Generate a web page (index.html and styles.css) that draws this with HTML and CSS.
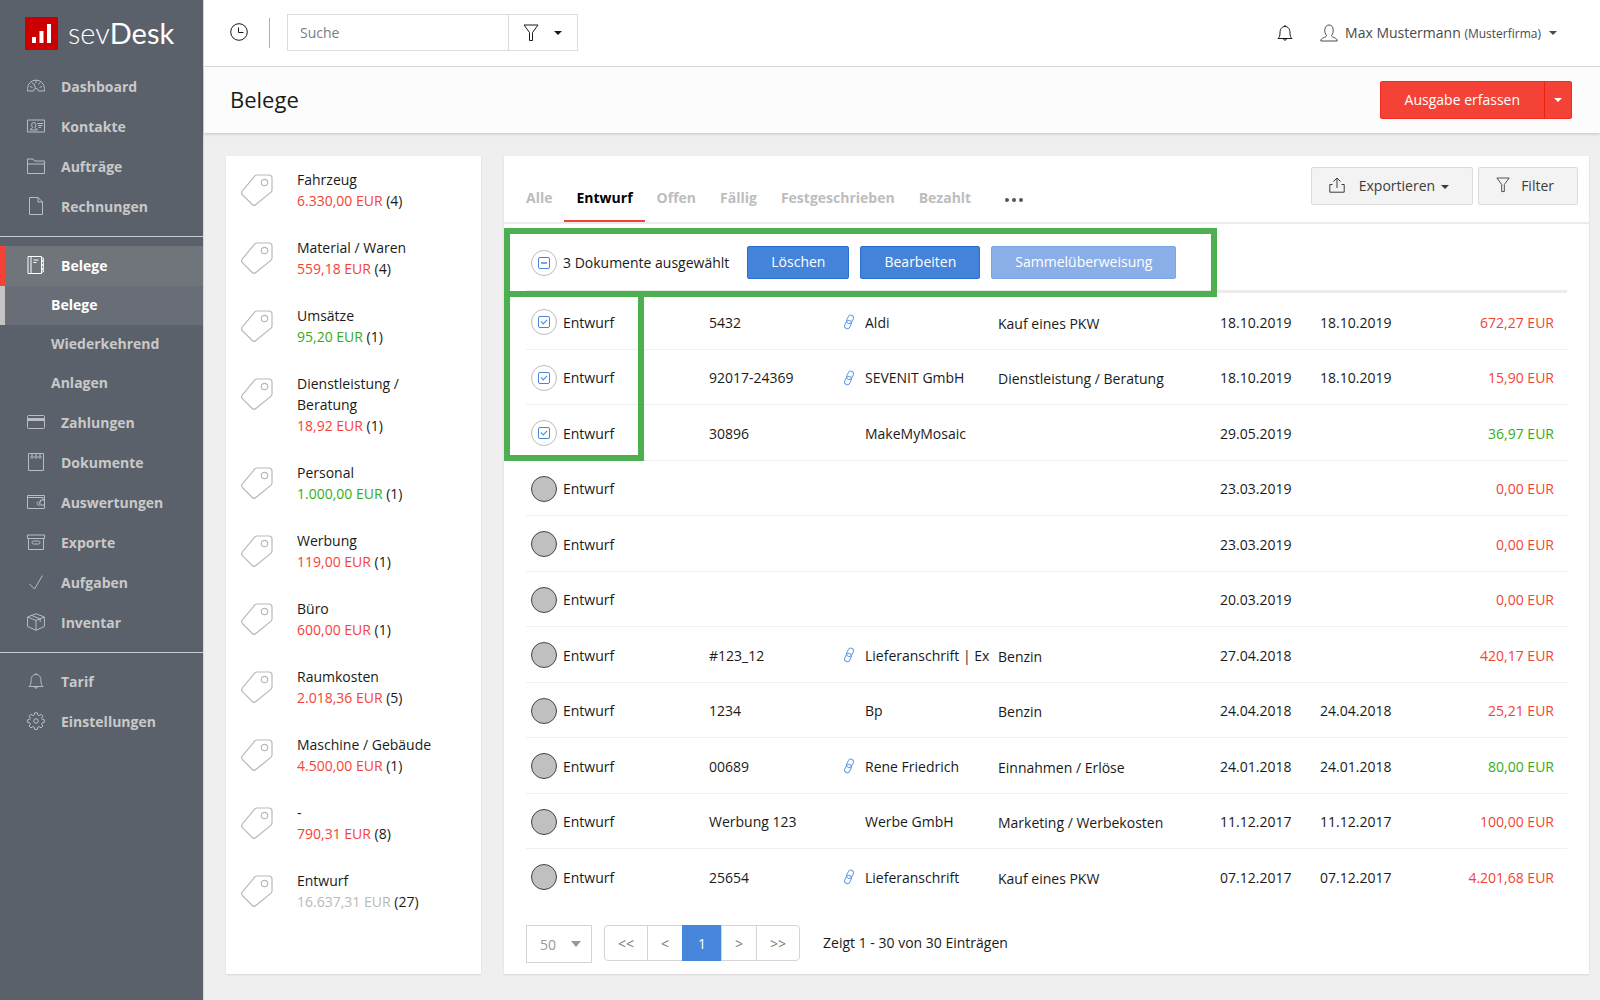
FILE: index.html
```html
<!DOCTYPE html>
<html lang="de">
<head>
    <meta charset="UTF-8">
    <meta name="viewport" content="width=device-width, initial-scale=1.0">
    <title>sevDesk - Belege</title>
    <link rel="stylesheet" href="styles.css">
</head>
<body>
    <!-- Shared icons -->
    <svg width="0" height="0" class="sprite">
        <symbol id="icon-tag" viewBox="0 0 32 32">
            <path d="M16 1H28a3 3 0 0 1 3 3V16a3 3 0 0 1-.9 2.100L15.200 30.300a3 3 0 0 1-4.200 0L1.600 20.800a3 3 0 0 1 0-4.200L13.900 1.900A3 3 0 0 1 16 1z"/>
            <circle cx="23.500" cy="8.500" r="3.200"/>
        </symbol>
        <symbol id="icon-link" viewBox="0 0 12 16">
            <rect x="4.300" y="1" width="5.400" height="8.600" rx="2.700" transform="rotate(28 7 5.300)"/>
            <rect x="2.300" y="6.200" width="5.400" height="8.600" rx="2.700" transform="rotate(28 5 10.500)"/>
        </symbol>
        <symbol id="icon-funnel" viewBox="0 0 16 18">
            <path d="M1 1h14l-5.500 7.500V16.500h-3V8.500z"/>
        </symbol>
        <symbol id="icon-bell" viewBox="0 0 18 18">
            <path d="M2 14.500c1.500-1.500 2-2.500 2-5.500C4 5 5.800 2.500 9 2.500S14 5 14 9c0 3 .5 4 2 5.500zM9 2.500V1M7.500 14.500a1.500 1.700 0 0 0 3 0"/>
        </symbol>
    </svg>

    <div class="app">
        <aside class="sidebar">
            <a href="#" class="logo">
                <svg width="33" height="33" viewBox="0 0 33 33">
                    <rect width="33" height="33" rx="1" fill="#cc0000"/>
                    <path d="M7 20h4v6H7zM14.500 14h4v12h-4zM22 7h4v19h-4z" fill="#fff"/>
                </svg>
                <span class="logo-text">sev<b>Desk</b></span>
            </a>

            <nav>
                <ul class="nav-list">
                    <li><a href="#">
                        <svg class="icon" viewBox="0 0 18 18"><path d="M.6 14v-2.500a8.400 8.400 0 0 1 16.800 0V14h-5.900a2.500 2.500 0 0 0-5 0zM9 3v3M3 9.500l2.500.8M15 9.500l-2.500.8M5 5.500l1.500 2M13 5.500l-1.500 2M7 6.500l1.500 5"/></svg>
                        Dashboard</a></li>
                    <li><a href="#">
                        <svg class="icon" viewBox="0 0 18 18"><path d="M.5 3h17v12H.5zM3 13c0-1.500 2.500-1.200 2.500-2.500C4 8.500 4.500 5.500 6.800 5.500S9.500 8.500 8 10.500c0 1.300 2.500 1 2.500 2.500zM10.500 6.500H16M11 8.500h4.500M11.500 10.500H14"/></svg>
                        Kontakte</a></li>
                    <li><a href="#">
                        <svg class="icon" viewBox="0 0 18 18"><path d="M.5 16.500V2h5.500l1.500 2h10v12.500zM.5 7h17"/></svg>
                        Aufträge</a></li>
                    <li><a href="#">
                        <svg class="icon" viewBox="0 0 18 18"><path d="M2.500.5h8.500l4.500 4.500v12.500h-13zM11 .5V5h4.500"/></svg>
                        Rechnungen</a></li>
                </ul>

                <ul class="nav-list">
                    <li class="active"><a href="#">
                        <svg class="icon" viewBox="0 0 18 18"><path d="M1 .5h13.500v17H1zM4 .5v17M6.500 4h5M6.500 6.500h3M14.500 2h1.800v3h-1.800M14.500 5h1.800v4h-1.800M14.500 9h1.800v4h-1.800M14.500 13h1.800v3h-1.800"/></svg>
                        Belege</a>
                        <ul class="subnav">
                            <li><a href="#" class="current">Belege</a></li>
                            <li><a href="#">Wiederkehrend</a></li>
                            <li><a href="#">Anlagen</a></li>
                        </ul>
                    </li>
                    <li><a href="#">
                        <svg class="icon" viewBox="0 0 18 18"><rect x=".5" y="2.500" width="17" height="13" rx="1"/><path d="M.5 6.500h17" stroke-width="3"/></svg>
                        Zahlungen</a></li>
                    <li><a href="#">
                        <svg class="icon" viewBox="0 0 18 18"><path d="M1.500.5h15v17h-15zM5 .5v2M9 .5v2M13 .5v2"/><circle cx="5" cy="4" r="1.200"/><circle cx="9" cy="4" r="1.200"/><circle cx="13" cy="4" r="1.200"/></svg>
                        Dokumente</a></li>
                    <li><a href="#">
                        <svg class="icon" viewBox="0 0 18 18"><path d="M17.500 7V2.500H.5v13h17V12M.5 4.500h15.500V7M17.500 7h-4v2h-2a1.500 1.500 0 0 0 0 3h6zM12 10.500h1.500"/></svg>
                        Auswertungen</a></li>
                    <li><a href="#">
                        <svg class="icon" viewBox="0 0 18 18"><path d="M.5 2h17v3.500H.5zM1.500 5.500v11h15v-11"/><rect x="5" y="8" width="8" height="3" rx="1.500"/></svg>
                        Exporte</a></li>
                    <li><a href="#">
                        <svg class="icon" viewBox="0 0 18 18"><path d="M2.500 11l5 5L15.500 2.500"/></svg>
                        Aufgaben</a></li>
                    <li><a href="#">
                        <svg class="icon" viewBox="0 0 18 18"><path d="M9 .8l8.400 3.200v9.500L9 17.300.6 13.500V4zM.6 4L9 7.500 17.400 4M9 7.500v9.800M4.800 2.500l8.400 3.500v3"/></svg>
                        Inventar</a></li>
                </ul>

                <ul class="nav-list">
                    <li><a href="#"><svg class="icon"><use href="#icon-bell"/></svg>Tarif</a></li>
                    <li><a href="#">
                        <svg class="icon" viewBox="0 0 18 18"><path d="M7.700.8h2.600l.5 2.200 1.300.6 2-1.300 1.800 1.800-1.300 2 .6 1.300 2.200.4v2.500l-2.200.5-.6 1.300 1.300 2-1.800 1.800-2-1.300-1.300.6-.5 2.200H7.700l-.5-2.200-1.300-.6-2 1.300-1.800-1.800 1.300-2-.6-1.300L.6 10.300V7.800l2.200-.4.6-1.300-1.300-2 1.800-1.800 2 1.300 1.300-.6z"/><circle cx="9" cy="9" r="2.300"/></svg>
                        Einstellungen</a></li>
                </ul>
            </nav>
        </aside>

        <div class="main">
            <header class="topbar">
                <button type="button" class="icon-button history" aria-label="Verlauf">
                    <svg width="18" height="18" viewBox="0 0 18 18"><circle cx="9" cy="9" r="8.300"/><path d="M8.500 4.500v5h5"/></svg>
                </button>
                <form class="search">
                    <input type="search" placeholder="Suche" aria-label="Suche">
                    <button type="button" aria-label="Suchfilter">
                        <svg width="16" height="18"><use href="#icon-funnel"/></svg>
                        <span class="caret"></span>
                    </button>
                </form>
                <button type="button" class="icon-button bell" aria-label="Benachrichtigungen">
                    <svg width="18" height="18"><use href="#icon-bell"/></svg>
                </button>
                <button type="button" class="user">
                    <svg width="18" height="18" viewBox="0 0 18 18"><path d="M.8 17c0-4 5.700-3 5.700-5.500C3.800 8.500 4 1 9 1s5.200 7.500 2.500 10.500c0 2.500 5.700 1.500 5.700 5.500z"/></svg>
                    <span>Max Mustermann <small>(Musterfirma)</small></span>
                    <span class="caret"></span>
                </button>
            </header>

            <div class="titlebar">
                <h1>Belege</h1>
                <div class="split-button">
                    <button type="button">Ausgabe erfassen</button>
                    <button type="button" class="toggle" aria-label="Mehr"><span class="caret"></span></button>
                </div>
            </div>

            <div class="content">
                <section class="panel categories">
                    <ul>
                        <li><svg class="tag"><use href="#icon-tag"/></svg><div>Fahrzeug<br><span class="negative">6.330,00 EUR</span> (4)</div></li>
                        <li><svg class="tag"><use href="#icon-tag"/></svg><div>Material / Waren<br><span class="negative">559,18 EUR</span> (4)</div></li>
                        <li><svg class="tag"><use href="#icon-tag"/></svg><div>Umsätze<br><span class="positive">95,20 EUR</span> (1)</div></li>
                        <li><svg class="tag"><use href="#icon-tag"/></svg><div>Dienstleistung / Beratung<br><span class="negative">18,92 EUR</span> (1)</div></li>
                        <li><svg class="tag"><use href="#icon-tag"/></svg><div>Personal<br><span class="positive">1.000,00 EUR</span> (1)</div></li>
                        <li><svg class="tag"><use href="#icon-tag"/></svg><div>Werbung<br><span class="negative">119,00 EUR</span> (1)</div></li>
                        <li><svg class="tag"><use href="#icon-tag"/></svg><div>Büro<br><span class="negative">600,00 EUR</span> (1)</div></li>
                        <li><svg class="tag"><use href="#icon-tag"/></svg><div>Raumkosten<br><span class="negative">2.018,36 EUR</span> (5)</div></li>
                        <li><svg class="tag"><use href="#icon-tag"/></svg><div>Maschine / Gebäude<br><span class="negative">4.500,00 EUR</span> (1)</div></li>
                        <li><svg class="tag"><use href="#icon-tag"/></svg><div>-<br><span class="negative">790,31 EUR</span> (8)</div></li>
                        <li><svg class="tag"><use href="#icon-tag"/></svg><div>Entwurf<br><span class="neutral">16.637,31 EUR</span> (27)</div></li>
                    </ul>
                </section>

                <section class="panel documents">
                    <div class="tabbar">
                        <nav class="tabs">
                            <a href="#">Alle</a>
                            <a href="#" class="active">Entwurf</a>
                            <a href="#">Offen</a>
                            <a href="#">Fällig</a>
                            <a href="#">Festgeschrieben</a>
                            <a href="#">Bezahlt</a>
                            <a href="#" class="more" aria-label="Mehr">
                                <svg width="18" height="4" viewBox="0 0 18 4"><circle cx="2" cy="2" r="2"/><circle cx="9" cy="2" r="2"/><circle cx="16" cy="2" r="2"/></svg>
                            </a>
                        </nav>
                        <div class="tools">
                            <button type="button" class="export">
                                <svg width="16" height="16" viewBox="0 0 16 16"><path d="M3.500 7.500H.8v7.700h14.400V7.500h-2.700M8 11V1M4.500 4.500L8 1l3.500 3.500"/></svg>
                                Exportieren<span class="caret"></span>
                            </button>
                            <button type="button" class="filter">
                                <svg width="14" height="16"><use href="#icon-funnel"/></svg>
                                Filter
                            </button>
                        </div>
                    </div>

                    <div class="list">
                        <div class="selection">
                            <label><input type="checkbox" class="pick partial">3 Dokumente ausgewählt</label>
                            <button type="button">Löschen</button>
                            <button type="button">Bearbeiten</button>
                            <button type="button" disabled>Sammelüberweisung</button>
                        </div>

                        <table>
                            <colgroup>
                                <col class="col-status"><col class="col-number"><col class="col-link"><col class="col-name">
                                <col class="col-category"><col class="col-date"><col class="col-date"><col>
                            </colgroup>
                            <tbody>
                                <tr>
                                    <td><label><input type="checkbox" class="pick" checked>Entwurf</label></td>
                                    <td>5432</td>
                                    <td><svg class="link"><use href="#icon-link"/></svg></td>
                                    <td class="name">Aldi</td>
                                    <td class="category">Kauf eines PKW</td>
                                    <td>18.10.2019</td>
                                    <td>18.10.2019</td>
                                    <td class="amount negative">672,27 EUR</td>
                                </tr>
                                <tr>
                                    <td><label><input type="checkbox" class="pick" checked>Entwurf</label></td>
                                    <td>92017-24369</td>
                                    <td><svg class="link"><use href="#icon-link"/></svg></td>
                                    <td class="name">SEVENIT GmbH</td>
                                    <td class="category">Dienstleistung / Beratung</td>
                                    <td>18.10.2019</td>
                                    <td>18.10.2019</td>
                                    <td class="amount negative">15,90 EUR</td>
                                </tr>
                                <tr>
                                    <td><label><input type="checkbox" class="pick" checked>Entwurf</label></td>
                                    <td>30896</td>
                                    <td></td>
                                    <td class="name">MakeMyMosaic</td>
                                    <td class="category"></td>
                                    <td>29.05.2019</td>
                                    <td></td>
                                    <td class="amount positive">36,97 EUR</td>
                                </tr>
                                <tr>
                                    <td><label><input type="checkbox" class="pick">Entwurf</label></td>
                                    <td></td>
                                    <td></td>
                                    <td class="name"></td>
                                    <td class="category"></td>
                                    <td>23.03.2019</td>
                                    <td></td>
                                    <td class="amount negative">0,00 EUR</td>
                                </tr>
                                <tr>
                                    <td><label><input type="checkbox" class="pick">Entwurf</label></td>
                                    <td></td>
                                    <td></td>
                                    <td class="name"></td>
                                    <td class="category"></td>
                                    <td>23.03.2019</td>
                                    <td></td>
                                    <td class="amount negative">0,00 EUR</td>
                                </tr>
                                <tr>
                                    <td><label><input type="checkbox" class="pick">Entwurf</label></td>
                                    <td></td>
                                    <td></td>
                                    <td class="name"></td>
                                    <td class="category"></td>
                                    <td>20.03.2019</td>
                                    <td></td>
                                    <td class="amount negative">0,00 EUR</td>
                                </tr>
                                <tr>
                                    <td><label><input type="checkbox" class="pick">Entwurf</label></td>
                                    <td>#123_12</td>
                                    <td><svg class="link"><use href="#icon-link"/></svg></td>
                                    <td class="name">Lieferanschrift | Ex</td>
                                    <td class="category">Benzin</td>
                                    <td>27.04.2018</td>
                                    <td></td>
                                    <td class="amount negative">420,17 EUR</td>
                                </tr>
                                <tr>
                                    <td><label><input type="checkbox" class="pick">Entwurf</label></td>
                                    <td>1234</td>
                                    <td></td>
                                    <td class="name">Bp</td>
                                    <td class="category">Benzin</td>
                                    <td>24.04.2018</td>
                                    <td>24.04.2018</td>
                                    <td class="amount negative">25,21 EUR</td>
                                </tr>
                                <tr>
                                    <td><label><input type="checkbox" class="pick">Entwurf</label></td>
                                    <td>00689</td>
                                    <td><svg class="link"><use href="#icon-link"/></svg></td>
                                    <td class="name">Rene Friedrich</td>
                                    <td class="category">Einnahmen / Erlöse</td>
                                    <td>24.01.2018</td>
                                    <td>24.01.2018</td>
                                    <td class="amount positive">80,00 EUR</td>
                                </tr>
                                <tr>
                                    <td><label><input type="checkbox" class="pick">Entwurf</label></td>
                                    <td>Werbung 123</td>
                                    <td></td>
                                    <td class="name">Werbe GmbH</td>
                                    <td class="category">Marketing / Werbekosten</td>
                                    <td>11.12.2017</td>
                                    <td>11.12.2017</td>
                                    <td class="amount negative">100,00 EUR</td>
                                </tr>
                                <tr>
                                    <td><label><input type="checkbox" class="pick">Entwurf</label></td>
                                    <td>25654</td>
                                    <td><svg class="link"><use href="#icon-link"/></svg></td>
                                    <td class="name">Lieferanschrift</td>
                                    <td class="category">Kauf eines PKW</td>
                                    <td>07.12.2017</td>
                                    <td>07.12.2017</td>
                                    <td class="amount negative">4.201,68 EUR</td>
                                </tr>
                            </tbody>
                        </table>

                        <!-- Highlight frames around the selection -->
                        <div class="marker marker-bar"></div>
                        <div class="marker marker-rows"></div>
                    </div>

                    <footer class="pagination">
                        <div class="page-size">
                            <select aria-label="Einträge pro Seite">
                                <option>50</option>
                            </select>
                            <span class="caret"></span>
                        </div>
                        <div class="pager">
                            <button type="button">&lt;&lt;</button>
                            <button type="button">&lt;</button>
                            <button type="button" class="active">1</button>
                            <button type="button">&gt;</button>
                            <button type="button">&gt;&gt;</button>
                        </div>
                        <span>Zeigt 1 - 30 von 30 Einträgen</span>
                    </footer>
                </section>
            </div>
        </div>
    </div>
</body>
</html>
```
FILE: styles.css
```css
:root {
    --sidebar: #5b616b;
    --red: #f44336;
    --green: #35ac19;
    --blue: #4787db;
    --marker: #4caf50;
    --line: #ebebeb;
}

*, *::before, *::after {
    box-sizing: border-box;
}

body {
    margin: 0;
    font-family: "Open Sans", sans-serif;
    font-size: 14px;
    line-height: 21px;
    color: #1a1a1a;
    background: #efefef;
}

button, input, select {
    font: inherit;
    color: inherit;
}

button {
    cursor: pointer;
    padding: 0;
    border: none;
    background: none;
}

a {
    color: inherit;
    text-decoration: none;
}

ul {
    list-style: none;
    margin: 0;
    padding: 0;
}

svg {
    flex: none;
    fill: none;
    stroke: currentColor;
}

.sprite {
    position: absolute;
}

.caret {
    display: inline-block;
    border: 4px solid transparent;
    border-top-color: currentColor;
    border-bottom: none;
}

.negative {
    color: var(--red);
}

.positive {
    color: var(--green);
}

.neutral {
    color: #b9b9b9;
}

.app {
    display: flex;
    min-height: 100vh;
}

/* Sidebar */
.sidebar {
    flex: none;
    width: 204px;
    background: var(--sidebar);
    border-right: 1px solid #d5d7d9;
    color: #c9c9c9;
    font-weight: bold;
}

.logo {
    display: flex;
    align-items: center;
    gap: 10px;
    height: 67px;
    padding-left: 25px;
    color: #fff;
}

.logo svg {
    stroke: none;
}

.logo-text {
    padding-bottom: 3px;
    font-family: Lato, sans-serif;
    font-size: 29px;
    font-weight: 300;
}

.logo-text b {
    font-weight: 400;
}

.nav-list + .nav-list {
    margin-top: 9px;
    padding-top: 9px;
    border-top: 1px solid #c9cbce;
}

.nav-list a {
    display: flex;
    align-items: center;
    gap: 16px;
    height: 40px;
    padding: 0 0 2px 27px;
}

.icon {
    width: 18px;
    height: 18px;
    stroke: #b9bcc0;
}

.nav-list .active > a {
    padding-left: 22px;
    border-left: 5px solid var(--red);
    background: #70747b;
    color: #fff;
}

.active > a .icon {
    stroke: #fff;
}

.nav-list .subnav a {
    height: 39px;
    padding-left: 51px;
}

.nav-list .subnav .current {
    padding-left: 46px;
    border-left: 5px solid #c4c4c4;
    background: #686d76;
    color: #fff;
}

/* Top bar */
.main {
    flex: 1;
    min-width: 0;
}

.topbar {
    display: flex;
    align-items: center;
    height: 67px;
    padding: 0 43px 1px 26px;
    background: #fff;
    border-bottom: 1px solid #dcdcdc;
}

.icon-button {
    display: flex;
}

.history {
    padding: 5px 21px 7px 0;
    border-right: 1px solid #b0b0b0;
}

.search {
    display: flex;
    height: 37px;
    margin-left: 17px;
    border: 1px solid #dcdcdc;
}

.search input {
    width: 220px;
    padding: 0 12px;
    border: none;
    outline: none;
}

.search input::placeholder {
    color: #7c7c7c;
}

.search button {
    display: flex;
    align-items: center;
    gap: 15px;
    padding: 0 15px 0 14px;
    border-left: 1px solid #dcdcdc;
}

.bell {
    margin-left: auto;
}

.user {
    display: flex;
    align-items: center;
    margin-left: 26px;
    color: #4a4a4a;
}

.user svg {
    margin-right: 7px;
}

.user small {
    font-size: 12px;
}

.user .caret {
    margin-left: 8px;
}

.titlebar {
    position: relative;
    display: flex;
    justify-content: space-between;
    align-items: center;
    height: 66px;
    padding: 0 28px 0 26px;
    background: #fcfcfc;
    box-shadow: 0 1px 3px rgba(0, 0, 0, 0.2);
}

h1 {
    margin: 0;
    padding-bottom: 2px;
    font-size: 22px;
    font-weight: 400;
}

.split-button {
    display: flex;
    height: 38px;
    border: 1px solid #f02d1e;
    border-radius: 2px;
    background: var(--red);
    color: #fff;
}

.split-button button {
    padding: 0 24px 2px;
}

.split-button .toggle {
    display: flex;
    align-items: center;
    padding: 0 9px;
    border-left: 1px solid #f02010;
}

/* Panels */
.content {
    display: flex;
    gap: 23px;
    padding: 23px 11px 27px 22px;
}

.panel {
    background: #fff;
    box-shadow: 0 1px 2px rgba(0, 0, 0, 0.1);
}

.categories {
    flex: none;
    width: 255px;
    padding: 13px 35px 13px 15px;
}

.categories li {
    display: flex;
    gap: 24px;
    margin-bottom: 26px;
}

.categories li:last-child {
    margin-bottom: 0;
}

.tag {
    width: 32px;
    height: 32px;
    margin-top: 5px;
    stroke: #b9b9b9;
    stroke-width: 1.2px;
}

.documents {
    flex: 1;
    min-width: 0;
    padding-bottom: 11px;
}

.tabbar {
    display: flex;
    justify-content: space-between;
    height: 68px;
    padding: 0 11px 0 10px;
    border-bottom: 2px solid var(--line);
}

.tabs {
    display: flex;
    font-weight: bold;
    color: #bdbdbd;
}

.tabs a {
    padding: 31px 12px 0;
}

.tabs .active {
    border-bottom: 2px solid var(--red);
    color: #000;
}

.tabs .more {
    padding: 42px 22px 0;
}

.more svg {
    display: block;
    fill: #555;
    stroke: none;
}

.tools {
    display: flex;
    gap: 5px;
    padding-top: 11px;
    color: #3c3c3c;
}

.tools button {
    display: flex;
    align-items: center;
    height: 38px;
    padding: 0 23px 2px 17px;
    border: 1px solid #dcdcdc;
    border-radius: 2px;
    background: #f3f3f3;
}

.tools svg {
    margin-right: 14px;
}

.tools .filter svg {
    margin-right: 11px;
}

.tools .caret {
    margin-top: 3px;
    margin-left: 6px;
}

/* Document list */
.list {
    position: relative;
    padding: 0 22px;
}

.selection {
    display: flex;
    align-items: center;
    gap: 11px;
    height: 69px;
    padding: 11px 0 0 5px;
    border-bottom: 3px solid var(--line);
}

.selection label {
    margin-right: 7px;
}

.selection button {
    height: 33px;
    padding: 0 23px 2px;
    border: 1px solid #2a70d3;
    border-radius: 2px;
    background: #4483da;
    color: #fff;
}

.selection button:disabled {
    border-color: #78a5e6;
    background: #8aafe8;
}

label {
    display: flex;
    align-items: center;
    gap: 6px;
}

.pick {
    appearance: none;
    display: grid;
    place-items: center;
    place-content: center;
    width: 26px;
    height: 26px;
    margin: 0;
    border: 1px solid #444;
    border-radius: 50%;
    background: #c0c0c0;
}

.pick:checked, .pick.partial {
    border-color: #bbb;
    background: #fff;
}

.pick::before, .pick::after {
    grid-area: 1 / 1;
}

.pick:checked::before, .pick.partial::before {
    content: "";
    width: 12px;
    height: 12px;
    border: 1px solid var(--blue);
    border-radius: 2px;
}

.pick:checked::after {
    content: "";
    width: 6px;
    height: 4px;
    margin-bottom: 2px;
    border: solid var(--blue);
    border-width: 0 0 1px 1px;
    transform: rotate(-45deg);
}

.pick.partial::after {
    content: "";
    width: 6px;
    height: 2px;
    background: #77a8e8;
}

table {
    width: 100%;
    margin-top: 1px;
    table-layout: fixed;
    border-collapse: separate;
    border-spacing: 0;
}

.col-status {
    width: 183px;
}

.col-number {
    width: 134px;
}

.col-link {
    width: 22px;
}

.col-name {
    width: 133px;
}

.col-category {
    width: 222px;
}

.col-date {
    width: 100px;
}

td {
    height: 55px;
    padding: 1px 0 0;
    border-bottom: 1px solid #f0f0f0;
    white-space: nowrap;
}

tr:nth-child(odd) td {
    height: 56px;
}

tr:last-child td {
    border-bottom-color: transparent;
}

td label {
    padding-left: 5px;
}

.name {
    overflow: hidden;
}

td.category {
    padding-top: 3px;
}

td.amount {
    padding-right: 13px;
    text-align: right;
}

.link {
    display: block;
    width: 12px;
    height: 16px;
    stroke: #649de9;
}

.marker {
    position: absolute;
    left: 0;
    border: 6px solid var(--marker);
    pointer-events: none;
}

.marker-bar {
    top: 4px;
    width: 713px;
    height: 69px;
}

.marker-rows {
    top: 67px;
    width: 140px;
    height: 170px;
}

/* Pagination */
.pagination {
    display: flex;
    align-items: flex-start;
    padding: 20px 22px 0;
}

.page-size {
    display: flex;
    align-items: center;
    height: 38px;
    margin-right: 12px;
    padding-right: 10px;
    border: 1px solid #d5d5d5;
    color: #999;
}

.page-size select {
    appearance: none;
    width: 44px;
    height: 36px;
    padding: 0 0 0 13px;
    border: none;
    background: none;
}

.page-size .caret {
    border-width: 6px 5px 0;
}

.pager {
    display: flex;
    height: 36px;
    margin-right: 23px;
    border: 1px solid #d5d5d5;
    border-radius: 4px;
    color: #7c7c7c;
}

.pager button {
    padding: 0 13px;
}

.pager button + button {
    border-left: 1px solid #d5d5d5;
}

.pager button.active {
    margin: -1px 0;
    padding: 0 15px;
    border-left-color: var(--blue);
    background: var(--blue);
    color: #fff;
}

.pagination > span {
    padding-top: 7px;
}
```
